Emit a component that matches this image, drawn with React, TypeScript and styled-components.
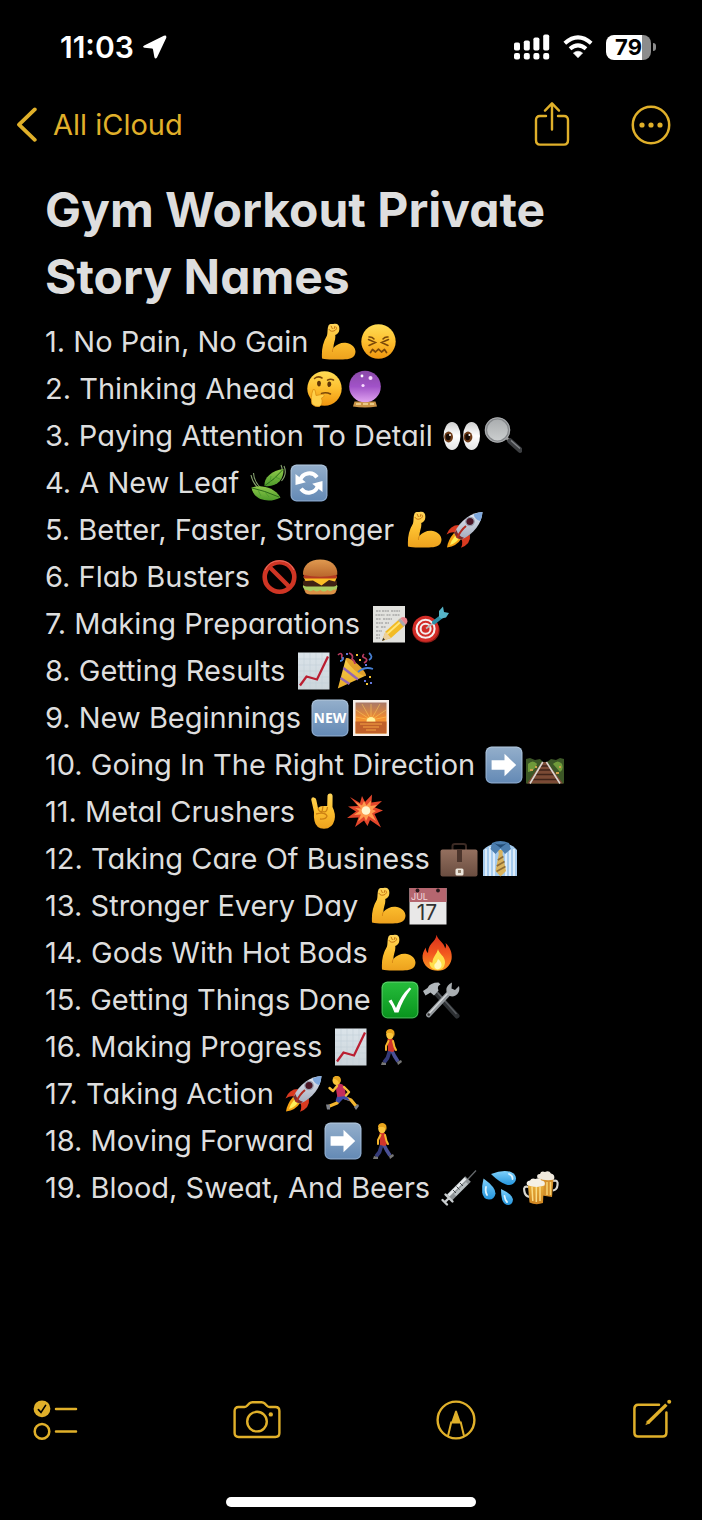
import React from "react";
import styled, { createGlobalStyle } from "styled-components";

const GOLD = "#e0b02a";

const GlobalStyle = createGlobalStyle`
  *, *::before, *::after { box-sizing: border-box; }
  html, body { margin: 0; padding: 0; background: #000; }
  body {
    color: #dedede;
    font-family: Inter, "Liberation Sans", sans-serif;
    font-feature-settings: "cv11";
  }
`;

const Screen = styled.div`
  display: flex;
  flex-direction: column;
  min-height: 100vh;
  background: #000;
`;

const Defs = styled.svg`
  display: block;
`;

const StatusBar = styled.header`
  display: flex;
  align-items: center;
  justify-content: space-between;
  height: 94px;
  padding: 0 46px 0 60px;
  color: #fff;
`;

const StatusGroup = styled.div<{ $gap: number }>`
  display: flex;
  align-items: center;
  gap: ${(p) => p.$gap}px;
`;

const Clock = styled.time`
  font-size: 30px;
  line-height: 36px;
  font-weight: 600;
`;

const Battery = styled.div`
  display: flex;
  align-items: center;
  gap: 2px;
`;

const BatteryBody = styled.div`
  display: flex;
  align-items: center;
  justify-content: center;
  width: 45px;
  height: 25px;
  border-radius: 8px;
  background: linear-gradient(to right, #fff 79%, #8c8c8c 79%);
  color: #000;
  font-size: 22px;
  line-height: 25px;
  font-weight: 700;
`;

const BatteryTip = styled.div`
  width: 3px;
  height: 8px;
  border-radius: 0 3px 3px 0;
  background: #8c8c8c;
`;

const NavBar = styled.nav`
  display: flex;
  align-items: center;
  justify-content: space-between;
  height: 62px;
  padding: 0 30px 0 16px;
`;

const BackLink = styled.a`
  display: flex;
  align-items: center;
  gap: 15px;
  color: ${GOLD};
  font-size: 29px;
  line-height: 36px;
  text-decoration: none;
`;

const NavActions = styled.div`
  display: flex;
  align-items: center;
  gap: 60px;
`;

const IconButton = styled.button`
  display: flex;
  padding: 0;
  border: 0;
  background: none;
  color: ${GOLD};
  cursor: pointer;
`;

const Note = styled.main`
  flex: 1;
  padding: 20px 45px 0;
`;

const Title = styled.h1`
  max-width: 560px;
  margin: 0;
  font-size: 48px;
  line-height: 67px;
  font-weight: 700;
`;

const Entries = styled.ol`
  margin: 8px 0 0;
  padding: 0;
  list-style: none;
`;

const Entry = styled.li`
  display: flex;
  align-items: center;
  gap: 10px;
  height: 47px;
  font-size: 29px;
  line-height: 47px;
  white-space: nowrap;
`;

const EmojiGroup = styled.span`
  display: flex;
  gap: 3px;
`;

const Toolbar = styled.footer`
  display: flex;
  align-items: center;
  justify-content: space-between;
  height: 80px;
  padding: 0 30px 0 33px;
`;

const HomeArea = styled.div`
  display: flex;
  justify-content: center;
  padding: 37px 0 13px;
`;

const HomeIndicator = styled.div`
  width: 250px;
  height: 10px;
  border-radius: 5px;
  background: #fff;
`;

const Tile = ({ fill = "url(#tile)" }: { fill?: string }) => (
  <>
    <rect x="0.5" y="0.5" width="37" height="37" rx="6" fill={fill} />
    <rect x="1.2" y="1.2" width="35.6" height="35.6" rx="5.5" fill="none" stroke="#fff" strokeOpacity="0.25" />
  </>
);

const walker = (
  <>
    <path d="M17 22 L14.5 30 L11 34.5" stroke="#343a78" strokeWidth="3.8" fill="none" strokeLinejoin="round" />
    <path d="M18 21 L21.5 28 L25 33.5" stroke="#4a5096" strokeWidth="3.6" fill="none" strokeLinejoin="round" />
    <path d="M9 34 l4 1 0 2 -5 0z M24 34 l4 -2 1 2 -4 3z" fill="#777" />
    <path d="M14.5 11 q4 -3 6.5 2 l1 9 -2 2 -5 -1z" fill="#d2342b" />
    <path d="M15.5 13 L13 18 L13 22 M20 13 L21.5 19 L23 22" stroke="#f4b62d" strokeWidth="2" fill="none" strokeLinecap="round" />
    <ellipse cx="17" cy="6.5" rx="3.8" ry="4.8" fill="#fbc43b" />
    <path d="M13 5 q0 -4 5 -4 q5 1 3 8 q-1 -4 -3 -4z" fill="#e9a41c" />
  </>
);

const EMOJI = {
  arm: (
    <>
      <path
        d="M4 35.5 C3.5 27 4.5 20 9 12.5 C9.8 10 9.2 5 10.5 2.5 C12 .3 15 1.2 17 .8 C20 .6 21.6 3 21.3 6 C21.5 9 19.5 11 17.2 12 C18 16 15.5 20 15.3 25 C19 21 24 18.8 29 20 C35 21.5 38.5 26 37.2 30.5 C36 35.5 31 36.4 25 36.4 C17 36.4 9 37 4 35.5Z"
        fill="url(#skin)"
      />
      <path d="M10.8 6 Q12.5 9.5 17 7.5 Q19.5 6 18 3.8 M13 2.8 L14.5 6 M17 3 L16 6" fill="none" stroke="#c97a13" strokeWidth="1" />
      <path d="M15.3 25 Q14 27 14.5 29" fill="none" stroke="#d98b17" strokeWidth="1" />
    </>
  ),
  confounded: (
    <>
      <circle cx="19.5" cy="18.5" r="17.2" fill="url(#face)" />
      <path d="M9.5 16.5 L16.5 19.5 L10 22.5 M29.5 16.5 L22.5 19.5 L29 22.5 M10 14 Q13 13.5 15 16 M29 14 Q26 13.5 24 16" fill="none" stroke="#7a4708" strokeWidth="1.5" strokeLinecap="round" />
      <path d="M11.5 29.5 L13.5 26.5 L16.5 29 L19.5 26.2 L22.5 29 L25.5 26.5 L27.5 29.5" fill="none" stroke="#7a4708" strokeWidth="1.7" strokeLinecap="round" strokeLinejoin="round" />
    </>
  ),
  thinking: (
    <>
      <circle cx="19.5" cy="18.5" r="17.2" fill="url(#face)" />
      <ellipse cx="14" cy="13.6" rx="1.9" ry="2.8" fill="#5e3506" />
      <ellipse cx="24.3" cy="14.2" rx="1.9" ry="2.8" fill="#5e3506" />
      <path d="M9.5 8.5 Q13 5.5 17 8 M22.5 10.2 Q25.5 8.2 28.5 10" fill="none" stroke="#7a4708" strokeWidth="1.5" strokeLinecap="round" />
      <path d="M16.5 23.5 Q21 21.8 25.5 24" fill="none" stroke="#7a4708" strokeWidth="1.6" strokeLinecap="round" />
      <path d="M8 19.5 Q10.5 18.8 10.5 22 L11 25.5 L18 24.2 Q20.2 25.2 18.5 27 L16.5 28 Q18.6 34 14.5 36.4 Q10 37.4 7 34.2 Q5.2 28 8 19.5Z" fill="#ffd04a" stroke="#dc8f12" strokeWidth="0.8" />
    </>
  ),
  crystal: (
    <>
      <path d="M8.5 31.5 H29.5 L31 36.5 Q19 38.5 7 36.5Z" fill="#c99347" />
      <path d="M10 34 H28" stroke="#f3dc9a" strokeWidth="1.5" strokeDasharray="5 2" />
      <circle cx="19" cy="16.5" r="15.8" fill="url(#ball)" />
      <circle cx="16" cy="6" r="1.4" fill="#fff" />
      <circle cx="24.5" cy="8" r="2" fill="#f9dcff" />
      <circle cx="17" cy="15.5" r="1.6" fill="#f9dcff" />
    </>
  ),
  eyes: (
    <>
      <ellipse cx="9" cy="19" rx="8.4" ry="14" fill="url(#eye)" />
      <ellipse cx="28.6" cy="19" rx="8.4" ry="14" fill="url(#eye)" />
      <ellipse cx="5.6" cy="20" rx="4.4" ry="5.4" fill="#6d3b18" />
      <ellipse cx="25" cy="20" rx="4.4" ry="5.4" fill="#6d3b18" />
      <ellipse cx="5.2" cy="20" rx="2.4" ry="3.2" fill="#160a04" />
      <ellipse cx="24.6" cy="20" rx="2.4" ry="3.2" fill="#160a04" />
      <circle cx="7" cy="18" r="1" fill="#fff" />
      <circle cx="26.4" cy="18" r="1" fill="#fff" />
    </>
  ),
  magnifier: (
    <>
      <path d="M22 20.5 L27 25" stroke="#a0a0a0" strokeWidth="3" />
      <path d="M26 24 L36 33" stroke="#3d3f42" strokeWidth="5.5" strokeLinecap="round" />
      <path d="M27 23.5 L36 31.5" stroke="#85888c" strokeWidth="1.3" />
      <circle cx="13.5" cy="13" r="11.6" fill="url(#lens)" stroke="#84878a" strokeWidth="2.4" />
      <circle cx="13.5" cy="13" r="12.2" fill="none" stroke="#c9cbcd" strokeWidth="0.6" />
    </>
  ),
  leaf: (
    <>
      <path d="M2 11 Q4 21 12 26 M4.5 9 Q5 18 12 24 M35 2 Q38.5 10 32.5 17 M32 1 Q35 8 31 14" fill="none" stroke="#87a36f" strokeWidth="1.1" />
      <path d="M2.5 23.5 C11 20.5 25 22.5 31.5 33.5 C22 39 5 38 2.5 23.5Z" fill="url(#leaf)" />
      <path d="M15.5 22 C14.5 13.5 23 6.5 34.5 5 C35 15.5 28 23.5 15.5 22Z" fill="url(#leaf)" />
      <path d="M3 24 Q15 26.5 30 33 M16 21.5 Q25 16 34 5.5" fill="none" stroke="#2b6a19" strokeWidth="1" />
      <path d="M9 26 l3 6 M16 28 l4 5 M21 18 l1 -6 M26 13 l5 2" stroke="#479c2b" strokeWidth="0.8" />
    </>
  ),
  refresh: (
    <>
      <Tile />
      <path d="M10.2 16 A9.6 9.6 0 0 1 27 13.2 M27.8 22 A9.6 9.6 0 0 1 11 24.8" fill="none" stroke="#fff" strokeWidth="4" />
      <path d="M5.5 10 V21 L15.8 18.2Z M32.5 28 V17 L22.2 19.8Z" fill="#fff" />
    </>
  ),
  rocket: (
    <>
      <path d="M14 14 Q5 14 1.5 23.5 Q7 20 12 22Z" fill="#d93a20" />
      <path d="M25 24 Q26 33 16 36.8 Q19 31 15 26Z" fill="#d93a20" />
      <path d="M9 22 Q3 29 2 36.5 Q12 35 16 28Z" fill="#f6a313" />
      <path d="M10 25 Q6 30 5 34 Q11 32 13.5 28Z" fill="#ffee58" />
      <path d="M37.5 1 C27 1.2 15 9 9.5 22 Q10.5 27.5 16.5 28.5 C29 23 37 12 37.5 1Z" fill="url(#hull)" />
      <path d="M37.5 1 Q33 1.3 28.5 3.4 Q30 8.5 35.3 10 Q37.3 5.5 37.5 1Z" fill="#7fa8dd" />
      <circle cx="25" cy="10.5" r="4.2" fill="#4b1626" stroke="#9a9fae" strokeWidth="1.2" />
      <path d="M9.5 22 Q10.5 27.5 16.5 28.5 L19 26.8 Q13 25 11.5 19Z" fill="#7d2b2b" />
      <path d="M21 15 Q16 19 12 27" stroke="#b32b20" strokeWidth="2" fill="none" />
    </>
  ),
  prohibited: (
    <>
      <circle cx="19.5" cy="19" r="14.8" fill="none" stroke="#cf3524" strokeWidth="4.6" />
      <path d="M9.5 9 L29.5 29" stroke="#cf3524" strokeWidth="4.4" />
      <path d="M5 12 A16 16 0 0 1 34 12" fill="none" stroke="#f08375" strokeWidth="0.8" />
    </>
  ),
  burger: (
    <>
      <path d="M3 29 H36 Q36 36.5 30 36.5 H9 Q3 36.5 3 29Z" fill="#dc9146" />
      <path d="M1.8 28 q2 -3 4 -1 h27 q3 -1 3.7 1 q-1 5 -4 3.5 q-3 3 -6 .6 q-4 3 -7 0 q-4 2.6 -7 0 q-3 2.4 -6 -.2 q-4 .4 -4.7 -3.9z" fill="#a9cc62" />
      <rect x="2" y="21.5" width="34" height="7" rx="3.5" fill="#3f2114" />
      <path d="M2.5 19 H36 L34 23.5 L28 22 L20.5 27.5 L12 22.5 L4.5 23Z" fill="#fbbd25" />
      <rect x="2.5" y="16.6" width="33.5" height="3.8" rx="1.9" fill="#b33a22" />
      <path d="M2 16.8 C1.5 7 9 1.5 19.2 1.5 C29.5 1.5 37 7 36.3 16.8 Q19 20.5 2 16.8Z" fill="url(#bun)" />
    </>
  ),
  memo: (
    <>
      <rect x="3" y="1" width="32" height="36.5" fill="#e2e2de" />
      <path d="M6 6 h5 m1 0 h7 m2 0 h9 M5.5 10 h9 m2 0 h4 m2 0 h7 M6 14 h5 m2 0 h9 M6 18 h7 m2 0 h4 M6 22 h3 m2 0 h5 M6 26 h6 M6 30 h4 M6 33 h4" stroke="#8b8b8b" strokeWidth="1.2" strokeDasharray="2 0.6" />
      <path d="M12 36 L15.5 26.5 L30 13.5 L35.5 20 L21 33Z" fill="#f2bb25" />
      <path d="M17 29 L32 15.5" stroke="#ffe67a" strokeWidth="1.8" />
      <path d="M12 36 L15.5 26.5 L21 33Z" fill="#ecd09c" />
      <path d="M12 36 L13.2 32.8 L15 34.8Z" fill="#333" />
      <path d="M28 15.3 L30.3 13.2 L35.8 19.7 L33.5 21.8Z" fill="#a9aaae" />
      <path d="M30.3 13.2 Q34 10.5 36.5 13.6 Q38.6 16.8 35.8 19.7Z" fill="#e8848d" />
    </>
  ),
  dart: (
    <>
      <ellipse cx="15" cy="25.5" rx="13.6" ry="12.2" fill="#901d18" />
      <circle cx="14.6" cy="23.8" r="13" fill="#d22c27" />
      <circle cx="14.6" cy="23.8" r="9" fill="none" stroke="#f4eeee" strokeWidth="2.1" />
      <circle cx="14.6" cy="23.8" r="5" fill="none" stroke="#f4eeee" strokeWidth="2.1" />
      <path d="M15 23.5 L25 16" stroke="#b9b9b9" strokeWidth="1.6" />
      <path d="M23 17.3 L32 10.5" stroke="#2c8ea6" strokeWidth="4" strokeLinecap="round" />
      <path d="M28 12 L28 6 L32 1.5 L33 7 L38 8 L35 12.5 L30.5 13.5Z" fill="#55b5c9" />
    </>
  ),
  chart: (
    <>
      <rect x="3" y="0.5" width="31.5" height="37" fill="url(#paper)" />
      <path d="M9 1 V37 M15 1 V37 M21 1 V37 M27 1 V37 M3 7 H34 M3 13 H34 M3 19 H34 M3 25 H34 M3 31 H34" stroke="#c4d0d8" strokeWidth="0.6" />
      <path d="M5 33.5 L11.5 24.5 L22 27.5 L33 4.5" fill="none" stroke="#ba1e31" strokeWidth="2.3" />
    </>
  ),
  party: (
    <>
      <path d="M1.8 36.5 L10 6 Q21 10 30 23.5Z" fill="url(#cone)" />
      <path d="M7.4 16 L22 27.5 M4.6 26 L13.5 32" stroke="#9467b4" strokeWidth="2.4" />
      <ellipse cx="20" cy="15" rx="3.2" ry="13" transform="rotate(-48 20 15)" fill="#e0a02c" />
      <path d="M2 3 q3 -3 4 0 q-1 4 2 4 M13 1 q5 2 3 6 q3 2 3 5 M28 2 q-3 3 1 4 q4 2 -1 5" fill="none" stroke="#b83b60" strokeWidth="1.7" />
      <path d="M4 9 q3 0 3 -4 M33 1 q5 4 0 7 M22 20 q7 -6 15 -3" fill="none" stroke="#4780d4" strokeWidth="1.8" />
      <path d="M23 7 h2 v2 h-2z M20 2 h2 v2 h-2z M33 24 h2 v2 h-2z M30 31 h2 v2 h-2z" fill="#f4c430" />
      <path d="M29 12 h2 v2 h-2z M34 30 h2 v2 h-2z M10 1 h2 v2 h-2z M28 28 h2 v2 h-2z" fill="#6377d9" />
    </>
  ),
  fresh: (
    <>
      <Tile />
      <text x="19" y="24" textAnchor="middle" fontFamily="'Open Sans', sans-serif" fontSize="14" fontWeight="700" fill="#fff">NEW</text>
    </>
  ),
  sunrise: (
    <>
      <rect x="1" y="1" width="36" height="36" fill="#f6eee8" />
      <rect x="3.5" y="3.5" width="31" height="31" fill="url(#sky)" />
      <path d="M19 21 L4 11 M19 21 L10 5 M19 21 V5 M19 21 L28 5 M19 21 L34 11 M19 21 L4 18 M19 21 L34 18" stroke="#ffd35c" strokeWidth="1" opacity="0.5" />
      <rect x="3.5" y="22.5" width="31" height="12" fill="#c0602a" />
      <path d="M8 25 H30 M11 28 H27 M14 31 H24" stroke="#f5a443" strokeWidth="1.2" />
      <path d="M14.5 22.5 a4.5 4.5 0 0 1 9 0z" fill="#fff29a" />
    </>
  ),
  arrow: (
    <>
      <Tile />
      <path d="M6.6 14.3 H19.5 V7.8 L31.2 19 L19.5 30.2 V23.7 H6.6Z" fill="#fff" />
    </>
  ),
  track: (
    <>
      <path d="M0 13 L4 12 L9 14 L14 13 L17 16 H21 L25 13 L30 14 L34 12 L38 13 V37.5 H0Z" fill="#3c5726" />
      <path d="M2 18 q5 -5 9 0 q-2 7 -9 8z M27 18 q5 -5 9 0 q2 6 -2 8z" fill="#6f9a3a" />
      <path d="M4 23 h3 v2 h-3z M33 20 h2 v2 h-2z M30 26 h3 v2 h-3z M9 20 h2 v2 h-2z" fill="#cda04a" />
      <path d="M16 16 H21 L37 37.5 H1Z" fill="#7a4a35" />
      <path d="M15 20 H23 M13 24 H25 M10 28.5 H28 M7 33.5 H31" stroke="#40241a" strokeWidth="1.6" />
      <path d="M16.8 16 L4 37.5 M20.4 16 L34 37.5" stroke="#dcd7d2" strokeWidth="1.6" />
    </>
  ),
  horns: (
    <>
      <path d="M6.2 6.5 Q6.5 4 8.8 4.4 Q11 4.5 11.3 7 L13 15 Q15 12.8 18 13 L22.2 13 L22.5 2.5 Q23 .2 25.3 .4 Q27.8 .8 27.6 3.5 L27.5 14 Q31 21 29.5 27 Q27.5 35.5 19 35.8 Q11 35.5 9.5 28 Q8.6 24 9 19Z" fill="url(#skin)" />
      <path d="M13 15 Q14 19 17 19 L18 13 M18 18.5 Q22 20 22.5 14 M11 21 Q20 18.5 22 23 Q21 26.5 15 26" fill="none" stroke="#cc8013" strokeWidth="1.3" />
    </>
  ),
  boom: (
    <>
      <path d="M4 4 L14 10 L16 3 L19 9 L26 1.5 L25.5 9.5 L36 8 L29 14.5 L37 17.5 L28.5 21 L35 34.5 L24 27 L21.5 33 L18 27.5 L9 34 L12.5 24.5 L1 25 L10 18.5 L2 13.5 L12 13Z" fill="#e3462b" />
      <path d="M9 8.5 L16 12.5 L18 8 L20.5 12.5 L25 7.5 L24.5 13 L31 12 L26.5 16.5 L30 18 L26 20.5 L30 28 L22.5 23 L20 28 L18 23.5 L12 28.5 L15 21.5 L8 22 L13.5 18 L9 15 L15 15.5Z" fill="#ff9a4e" />
      <circle cx="20" cy="17.5" r="4.3" fill="#fff6cf" />
    </>
  ),
  briefcase: (
    <>
      <path d="M12.5 10 V6 Q12.5 4 15 4 H23.5 Q26 4 26 6 V10" fill="none" stroke="#3b2a24" strokeWidth="2" />
      <rect x="0.5" y="9.5" width="37" height="27" rx="2" fill="url(#leather)" />
      <path d="M17 9.5 H22 V22 H17Z" fill="#4c352c" />
      <rect x="15.5" y="28.5" width="8" height="7" rx="1.5" fill="#ece6dc" />
      <rect x="18" y="30" width="3" height="3" fill="#96836e" />
    </>
  ),
  shirt: (
    <>
      <path d="M2 10 Q7 5 13 4 H26 Q32 5 36 10 V36 H2Z" fill="#a5cbee" />
      <path d="M5 9 V36 M9 7 V36 M13 10 V36 M25 10 V36 M29 7 V36 M33 9 V36" stroke="#eaf4fd" strokeWidth="1.6" />
      <path d="M17 10 H22 L21.5 14 L25 31 L19.5 36.5 L14.5 31 L17.8 14Z" fill="#d9b35d" />
      <path d="M16.8 20 L22.4 16.5 M15.8 26 L23.6 21.5 M15.5 31.5 L24.5 26.5" stroke="#8e6c36" strokeWidth="1.5" />
      <path d="M11 3 Q19 -1 28 3 L30 9 L24 14 L19.5 8.5 L14.5 14 L9.5 9Z" fill="#4c7eaf" />
      <path d="M13 3 Q19 6 26 3 L19.5 8Z" fill="#234c75" />
    </>
  ),
  calendar: (
    <>
      <rect x="0.5" y="1" width="37" height="36.5" fill="#e9e8e8" />
      <rect x="0.5" y="1" width="37" height="14" fill="#b5666f" />
      <circle cx="8.5" cy="3.5" r="1.9" fill="#27191b" />
      <circle cx="29" cy="3.5" r="1.9" fill="#27191b" />
      <text x="2" y="13" fontSize="9" fill="#f3d9dc">JUL</text>
      <text x="18" y="33" textAnchor="middle" fontSize="21" fill="#333">17</text>
    </>
  ),
  fire: (
    <>
      <path d="M17.5 .8 C19 6.5 25 8.5 26.2 14.5 C27.3 12.5 27.2 11 26.5 9 C31 13 33.5 19 32.6 25 C31.4 32 26 36.8 19 36.8 C11 36.8 4.5 32 3.6 24.5 C3.2 20 4.5 17 7 13.5 C6.7 16 7.5 18 9 19 C9.3 15 9.8 12.5 12.5 9.5 C15 6.7 17.3 4.5 17.5 .8Z" fill="url(#flame)" />
      <path d="M19 15 C20 20 26 22 26 28 C26 33 23 36 19 36 C13 36 10 32 10.5 27.5 C12 28.5 12.5 29 13.5 28.5 C13.5 23 18 20 19 15Z" fill="#ffdf4a" />
      <path d="M19 25 Q23 28 22.5 32 Q21 35.5 18 35.2 Q14.5 34 15.5 30.5 Q18 29 19 25Z" fill="#fff7bb" />
    </>
  ),
  check: (
    <>
      <Tile fill="url(#green)" />
      <path d="M7.5 20 L10.5 18.5 L15 27 Q20 14 28.5 6.5 L30.3 7.8 Q22 18 17.5 31.5 H13.5 Q11.5 25 7.5 20Z" fill="#fff" />
    </>
  ),
  tools: (
    <>
      <path d="M13 11 L35 35" stroke="#2d3033" strokeWidth="5" strokeLinecap="round" />
      <path d="M15 11 L34.5 33" stroke="#595d61" strokeWidth="1.4" />
      <path d="M6.5 34 L28 11" stroke="#92979b" strokeWidth="4.8" strokeLinecap="round" />
      <path d="M7 32.5 L27 11" stroke="#d5d8da" strokeWidth="1.4" />
      <path d="M24.5 10.5 Q23.5 4.5 30 1.5 L29.5 7.5 L33 9 L37 5 Q38.5 11.5 33.5 14.5 Q29.5 16.5 26 14Z" fill="#a9aeb1" />
      <path d="M1 10 L5.5 7 Q8 1.5 16.5 1.5 L18.5 3.5 Q14.5 5 16.5 9.5 L12 14.5 L8.5 11.5 L3.5 14.5Z" fill="#b1b7bb" />
      <circle cx="6.8" cy="33.6" r="1.3" fill="#333" />
    </>
  ),
  walker,
  runner: (
    <>
      <path d="M16 22 L12 28 L3.5 31.5" stroke="#f2b52e" strokeWidth="3.2" fill="none" strokeLinejoin="round" />
      <path d="M18 22 L26 25 L31 31" stroke="#f2b52e" strokeWidth="3.2" fill="none" strokeLinejoin="round" />
      <path d="M12.5 20 L21 20 L25 26 L18 24 L14 28 L10.5 26Z" fill="#3e4aa5" />
      <path d="M11 9.5 Q17 7 19.5 12 L21 21 L12.5 22 Q10.5 14 11 9.5Z" fill="#c52e5d" />
      <path d="M12 11 L8 16 L4.5 13 M19 12 L24 17 L21 20.5" stroke="#f7bf39" strokeWidth="2.4" fill="none" strokeLinejoin="round" strokeLinecap="round" />
      <path d="M1 29.5 l4 0 0 5 -3 0z M29 32 l4 -3 1 2 -3 4z" fill="#7f8289" />
      <ellipse cx="11.5" cy="5.5" rx="4" ry="4.6" fill="#fbc43b" />
      <path d="M8 3.5 Q10 -.5 14.5 1.8 Q17.5 5 14 9 Q14 4.5 8 3.5Z" fill="#e7a51f" />
    </>
  ),
  syringe: (
    <>
      <path d="M28 10 L36 1.5" stroke="#676b6e" strokeWidth="1.2" />
      <path d="M9 29 L28 10" stroke="#8f9497" strokeWidth="8" />
      <path d="M8.5 26.5 L25.5 9.5" stroke="#e7eaec" strokeWidth="2.6" />
      <path d="M15 26 L27 14" stroke="#bac0c3" strokeWidth="3" />
      <path d="M13 21 l3 3 M16.5 17.5 l3 3 M20 14 l3 3" stroke="#42474a" strokeWidth="1" />
      <path d="M5.5 25.5 L12.5 32.5 M2.5 31 L7 35.5 M5 33 L9 29" stroke="#c9cdcf" strokeWidth="2.4" strokeLinecap="round" />
    </>
  ),
  drops: (
    <>
      <path d="M10 5 Q22 .5 30 3 Q36.5 6 34.5 12 Q31.5 17.5 25 15.5 Q18 13 10 5Z" fill="url(#drop)" />
      <path d="M2.5 9.5 Q14.5 18 14.5 24.5 Q13.5 30.5 8 30.5 Q2 30 1.2 23.5 Q.6 17 2.5 9.5Z" fill="url(#drop)" />
      <path d="M20 20 Q31 25 32 30.5 Q31.5 35.5 27.5 36 Q23 36 21.2 31 Q20 27 20 20Z" fill="url(#drop)" />
      <path d="M28 5 Q32 6.5 31.5 10 M5 18 Q4 23 6 26 M23.5 27 Q24 31 26 33" fill="none" stroke="#dff5ff" strokeWidth="1.8" strokeLinecap="round" />
    </>
  ),
  beers: (
    <>
      <path d="M31 12 Q36.5 10.5 35.5 16 Q35 21 31 21.5" fill="none" stroke="#d8d6cf" strokeWidth="2.2" />
      <path d="M17 8 L31.5 9.5 L30 28 L17 26Z" fill="#d5902b" />
      <path d="M25 13 V26 M28.5 13 V26" stroke="#f8d373" strokeWidth="1.5" />
      <path d="M15.5 9 Q14 5 18 5 Q19 1.5 23 3 Q27 1 29 4.5 Q33.5 5.5 32 10.5 Q24 12.5 15.5 9Z" fill="#efe9dd" />
      <path d="M6.5 18 Q1 16.5 2.3 22 Q3 27 7.5 28" fill="none" stroke="#d8d6cf" strokeWidth="2.2" />
      <path d="M5.8 15 H21.8 L21 34 Q14 36.5 7.5 33.5Z" fill="url(#beer)" />
      <path d="M10 18 L10.8 32 M14.3 18 V33 M18 18 V32" stroke="#fbdc85" strokeWidth="1.5" />
      <path d="M5 16 Q3.5 12 8 11.5 Q9.5 8.5 13.5 10 Q18 8 19.5 11.5 Q24 12 22.5 16.5 Q14 19.5 5 16Z" fill="#f5f0e5" />
    </>
  ),
};

type EmojiName = keyof typeof EMOJI;

const Emoji = ({ name }: { name: EmojiName }) => (
  <svg width="38" height="38" viewBox="0 0 38 38" aria-hidden="true">
    {EMOJI[name]}
  </svg>
);

const Linear = ({ id, stops }: { id: string; stops: string[] }) => (
  <linearGradient id={id} x1="0" y1="0" x2="0" y2="1">
    {stops.map((color, i) => (
      <stop key={i} offset={i / (stops.length - 1)} stopColor={color} />
    ))}
  </linearGradient>
);

const EmojiPaints = () => (
  <Defs width="0" height="0" aria-hidden="true">
    <defs>
      <Linear id="tile" stops={["#94afcb", "#6389b5"]} />
      <Linear id="green" stops={["#27bd3c", "#08931d"]} />
      <Linear id="skin" stops={["#ffd65c", "#fcbf2f", "#eda11d"]} />
      <Linear id="face" stops={["#ffdc55", "#fdbf2f", "#f0960f"]} />
      <Linear id="ball" stops={["#8a4aa8", "#a152c8", "#e0a3f0"]} />
      <Linear id="eye" stops={["#cfcfcf", "#ffffff", "#e3e3e3"]} />
      <Linear id="lens" stops={["#a9acae", "#cccfd0"]} />
      <Linear id="leaf" stops={["#8fca4b", "#4d9a2a"]} />
      <Linear id="hull" stops={["#e2e8f3", "#a3abbb"]} />
      <Linear id="bun" stops={["#e09a50", "#b9672c"]} />
      <Linear id="paper" stops={["#dbe4ea", "#ccd5db"]} />
      <Linear id="cone" stops={["#f6cf4b", "#e8ab2b"]} />
      <Linear id="sky" stops={["#a87969", "#f28b2e", "#ffc140"]} />
      <Linear id="leather" stops={["#94705f", "#6a4d40"]} />
      <Linear id="flame" stops={["#d9301c", "#f2551e", "#fb9a22"]} />
      <Linear id="drop" stops={["#7fd0fb", "#2495dd"]} />
      <Linear id="beer" stops={["#e9b03b", "#cf8421"]} />
    </defs>
  </Defs>
);

const ENTRIES: { text: string; emoji: EmojiName[] }[] = [
  { text: "No Pain, No Gain", emoji: ["arm", "confounded"] },
  { text: "Thinking Ahead", emoji: ["thinking", "crystal"] },
  { text: "Paying Attention To Detail", emoji: ["eyes", "magnifier"] },
  { text: "A New Leaf", emoji: ["leaf", "refresh"] },
  { text: "Better, Faster, Stronger", emoji: ["arm", "rocket"] },
  { text: "Flab Busters", emoji: ["prohibited", "burger"] },
  { text: "Making Preparations", emoji: ["memo", "dart"] },
  { text: "Getting Results", emoji: ["chart", "party"] },
  { text: "New Beginnings", emoji: ["fresh", "sunrise"] },
  { text: "Going In The Right Direction", emoji: ["arrow", "track"] },
  { text: "Metal Crushers", emoji: ["horns", "boom"] },
  { text: "Taking Care Of Business", emoji: ["briefcase", "shirt"] },
  { text: "Stronger Every Day", emoji: ["arm", "calendar"] },
  { text: "Gods With Hot Bods", emoji: ["arm", "fire"] },
  { text: "Getting Things Done", emoji: ["check", "tools"] },
  { text: "Making Progress", emoji: ["chart", "walker"] },
  { text: "Taking Action", emoji: ["rocket", "runner"] },
  { text: "Moving Forward", emoji: ["arrow", "walker"] },
  { text: "Blood, Sweat, And Beers", emoji: ["syringe", "drops", "beers"] },
];

const LocationIcon = () => (
  <svg width="24" height="24" viewBox="0 0 24 24" aria-hidden="true">
    <path d="M1.2 10.4 L20.8 .8 Q24 -.2 23.2 3 L14 22.4 Q12.4 24.8 11.4 22.2 L10 14.6 Q9.8 13.8 9 13.6 L1.4 12.8 Q-1.2 12 1.2 10.4Z" fill="#fff" />
  </svg>
);

const SignalIcon = () => (
  <svg width="36" height="26" viewBox="0 0 36 26" fill="#fff" aria-hidden="true">
    <rect x="0" y="8.5" width="6" height="8" rx="1.8" />
    <rect x="9.8" y="6.5" width="6" height="10" rx="1.8" />
    <rect x="19.4" y="3.5" width="6" height="13" rx="1.8" />
    <rect x="29.2" y="0.5" width="6" height="16" rx="1.8" />
    <rect x="0" y="19" width="6" height="6.4" rx="2" />
    <rect x="9.8" y="19" width="6" height="6.4" rx="2" />
    <rect x="19.4" y="19" width="6" height="6.4" rx="2" />
    <rect x="29.2" y="19" width="6" height="6.4" rx="2" />
  </svg>
);

const WifiIcon = () => (
  <svg width="30" height="24" viewBox="0 0 30 24" aria-hidden="true">
    <path d="M1.8 8.2 Q15 -3.6 28.2 8.2" fill="none" stroke="#fff" strokeWidth="4" />
    <path d="M7 13.8 Q15 7 23 13.8" fill="none" stroke="#fff" strokeWidth="4" />
    <path d="M10.4 18 Q15 14.4 19.6 18 L15 22.8Z" fill="#fff" stroke="#fff" strokeWidth="0.6" strokeLinejoin="round" />
  </svg>
);

const BackIcon = () => (
  <svg width="22" height="36" viewBox="0 0 22 36" aria-hidden="true">
    <path d="M18.8 2.4 L3 17.6 L18.8 32.8" fill="none" stroke="currentColor" strokeWidth="3.8" strokeLinecap="round" strokeLinejoin="round" />
  </svg>
);

const ShareIcon = () => (
  <svg width="36" height="46" viewBox="0 1 36 46" fill="none" stroke="currentColor" strokeWidth="2.4" strokeLinecap="round" strokeLinejoin="round" aria-hidden="true">
    <path d="M12 15 H6 Q2 15 2 19 V39 Q2 43.6 6 43.6 H30 Q34 43.6 34 39 V19 Q34 15 30 15 H24" />
    <path d="M18 28.5 V2.4 M11 9.6 L18 2.4 L25 9.6" />
  </svg>
);

const MoreIcon = () => (
  <svg width="42" height="42" viewBox="0 0 42 42" aria-hidden="true">
    <circle cx="21" cy="21" r="18.2" fill="none" stroke="currentColor" strokeWidth="2.5" />
    <circle cx="12" cy="21" r="2.6" fill="currentColor" />
    <circle cx="21" cy="21" r="2.6" fill="currentColor" />
    <circle cx="30" cy="21" r="2.6" fill="currentColor" />
  </svg>
);

const ChecklistIcon = () => (
  <svg width="45" height="42" viewBox="0 0 45 42" fill="none" stroke="currentColor" strokeWidth="2.5" strokeLinecap="round" aria-hidden="true">
    <circle cx="9" cy="9.8" r="8.4" fill="currentColor" stroke="none" />
    <path d="M5.4 10.6 L8 13.4 L12.6 6.4" stroke="#000" strokeWidth="1.6" />
    <circle cx="9" cy="32.4" r="7.3" />
    <path d="M23 10 H43 M23 32.4 H43" />
  </svg>
);

const CameraIcon = () => (
  <svg width="48" height="40" viewBox="0 0 48 40" fill="none" stroke="currentColor" strokeWidth="2.4" strokeLinejoin="round" aria-hidden="true">
    <path d="M1.6 11 Q1.6 7 5.6 7 H11.4 Q12.8 7 13.8 6 L16.4 3.4 Q17.6 2.2 19.4 2.2 H28.6 Q30.4 2.2 31.6 3.4 L34.2 6 Q35.2 7 36.6 7 H42.4 Q46.4 7 46.4 11 V33 Q46.4 37 42.4 37 H5.6 Q1.6 37 1.6 33Z" />
    <circle cx="24" cy="21.6" r="9.8" />
    <circle cx="37.8" cy="14.4" r="2.2" fill="currentColor" stroke="none" />
  </svg>
);

const MarkupIcon = () => (
  <svg width="42" height="42" viewBox="0 0 42 42" fill="none" stroke="currentColor" strokeWidth="2.4" aria-hidden="true">
    <circle cx="21" cy="21" r="18.4" />
    <path d="M13 37 L16.2 23.4 H25.8 L29 37" strokeWidth="2" />
    <path d="M20 12.4 Q21 10.6 22 12.4 L26 24 H16Z" fill="currentColor" stroke="none" />
  </svg>
);

const ComposeIcon = () => (
  <svg width="40" height="42" viewBox="0 0 40 42" fill="none" stroke="currentColor" strokeWidth="2.5" strokeLinecap="round" aria-hidden="true">
    <path d="M27 5.8 H6 Q2.4 5.8 2.4 9.6 V33.4 Q2.4 37.4 6 37.4 H30.6 Q34.4 37.4 34.4 33.4 V13.5" />
    <path d="M15.6 24 L34.4 5.6" strokeWidth="3.4" strokeLinecap="butt" />
    <path d="M14.2 25.6 L17.6 24 L15.6 22Z" fill="currentColor" strokeWidth="0.6" />
    <circle cx="37.2" cy="2.8" r="2" fill="currentColor" stroke="none" />
  </svg>
);

const App = () => (
  <>
    <GlobalStyle />
    <Screen>
      <EmojiPaints />
      <StatusBar>
        <StatusGroup $gap={9}>
          <Clock>11:03</Clock>
          <LocationIcon />
        </StatusGroup>
        <StatusGroup $gap={13}>
          <SignalIcon />
          <WifiIcon />
          <Battery>
            <BatteryBody>79</BatteryBody>
            <BatteryTip />
          </Battery>
        </StatusGroup>
      </StatusBar>
      <NavBar>
        <BackLink href="#">
          <BackIcon />
          All iCloud
        </BackLink>
        <NavActions>
          <IconButton aria-label="Share"><ShareIcon /></IconButton>
          <IconButton aria-label="More"><MoreIcon /></IconButton>
        </NavActions>
      </NavBar>
      <Note>
        <Title>Gym Workout Private Story Names</Title>
        <Entries>
          {ENTRIES.map((entry, i) => (
            <Entry key={entry.text}>
              <span>{`${i + 1}. ${entry.text}`}</span>
              <EmojiGroup>
                {entry.emoji.map((name) => (
                  <Emoji key={name} name={name} />
                ))}
              </EmojiGroup>
            </Entry>
          ))}
        </Entries>
      </Note>
      <Toolbar>
        <IconButton aria-label="Checklist"><ChecklistIcon /></IconButton>
        <IconButton aria-label="Camera"><CameraIcon /></IconButton>
        <IconButton aria-label="Markup"><MarkupIcon /></IconButton>
        <IconButton aria-label="New note"><ComposeIcon /></IconButton>
      </Toolbar>
      <HomeArea>
        <HomeIndicator />
      </HomeArea>
    </Screen>
  </>
);

export default App;
